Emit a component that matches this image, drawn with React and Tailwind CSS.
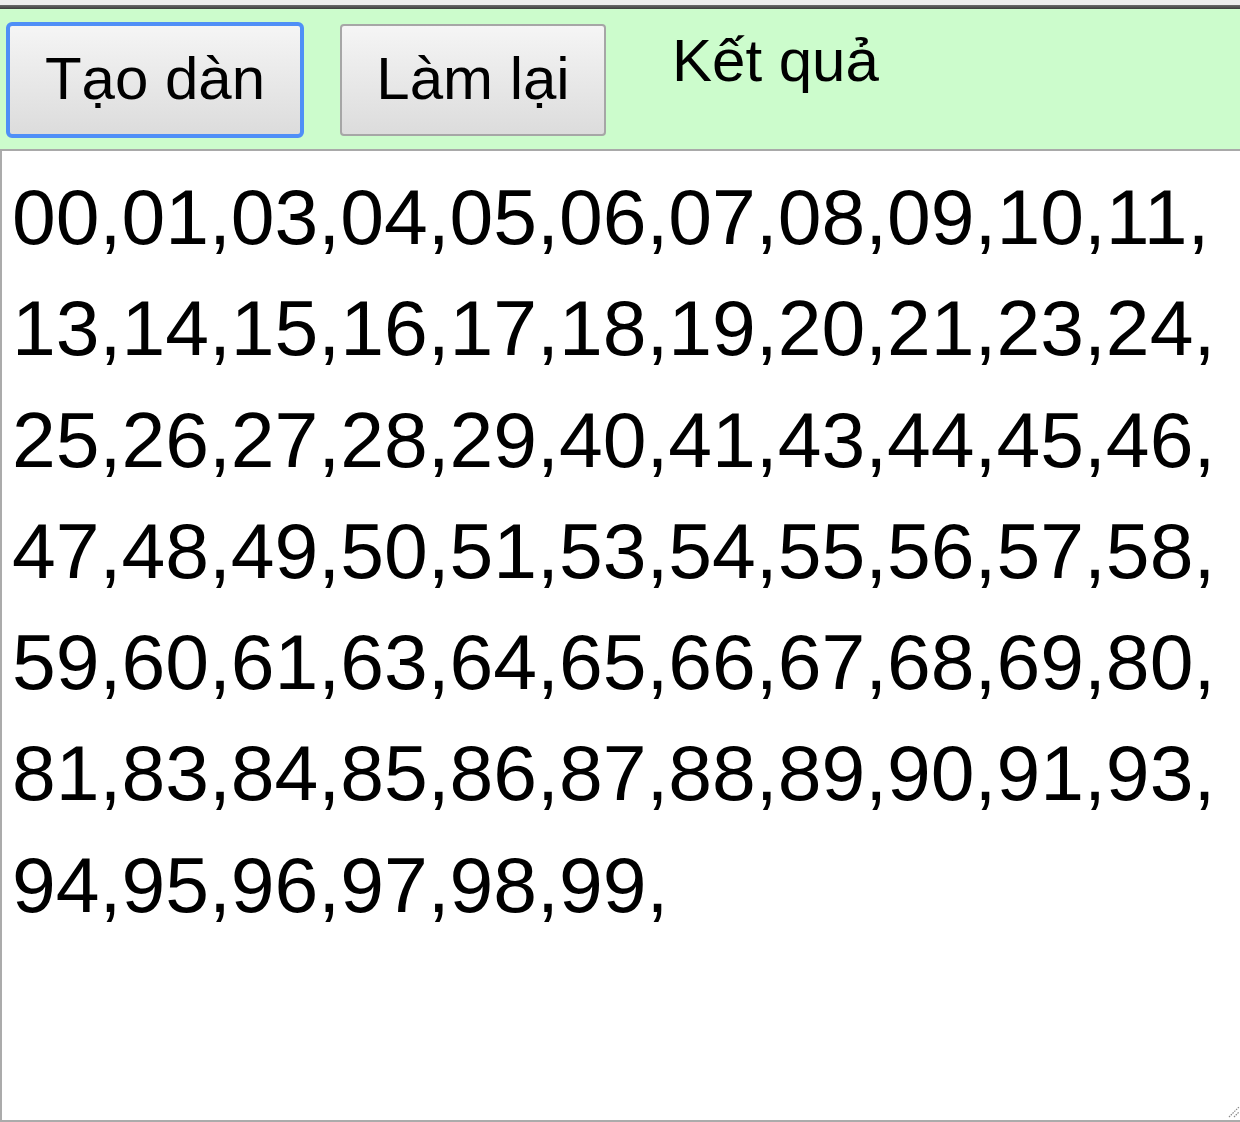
export default function App() {
  const rows = [
    "00,01,03,04,05,06,07,08,09,10,11,",
    "13,14,15,16,17,18,19,20,21,23,24,",
    "25,26,27,28,29,40,41,43,44,45,46,",
    "47,48,49,50,51,53,54,55,56,57,58,",
    "59,60,61,63,64,65,66,67,68,69,80,",
    "81,83,84,85,86,87,88,89,90,91,93,",
    "94,95,96,97,98,99,",
  ];
  return (
    <div
      className="w-[1240px] h-[1122px] overflow-hidden bg-white text-black"
      style={{ fontFamily: '"Liberation Sans", Arial, sans-serif' }}
    >
      <div className="h-[5px] bg-[#ececec]" />
      <div className="h-[4px] bg-gradient-to-b from-[#6a6a6a] to-[#3c3c3c]" />
      <div className="h-[140px] bg-[#ccfccc] flex items-start">
        <button className="ml-[6px] mt-[13px] w-[298px] h-[116px] rounded-[6px] border-[4px] border-[#4f8ff7] bg-gradient-to-b from-[#f5f5f5] to-[#dcdcdc] text-[60px] leading-none flex items-center justify-center pb-[3px]">
          Tạo dàn
        </button>
        <button className="ml-[36px] mt-[15px] w-[266px] h-[112px] rounded-[4px] border-[2px] border-[#a6a6a6] bg-gradient-to-b from-[#f5f5f5] to-[#dcdcdc] text-[60px] leading-none flex items-center justify-center pb-[3px]">
          Làm lại
        </button>
        <div className="ml-[66px] mt-[17px] text-[60px] leading-[70px]">Kết quả</div>
      </div>
      <div className="h-[2px] bg-[#a9a9a9]" />
      <div className="relative h-[971px] border-l-[2px] border-b-[2px] border-[#ababab] bg-white pl-[10px] pt-[11px]">
        <div className="text-[78.7px] leading-[111.3px]">
          {rows.map((r, i) => (
            <div key={i} className="whitespace-nowrap">{r}</div>
          ))}
        </div>
        <svg
          className="absolute right-0 bottom-[2px]"
          width="12"
          height="12"
          viewBox="0 0 12 12"
        >
          <line x1="1" y1="11" x2="11" y2="1" stroke="#8a8a8a" strokeWidth="1.2" strokeDasharray="1.5 1" />
          <line x1="6" y1="11" x2="11" y2="6" stroke="#8a8a8a" strokeWidth="1.2" strokeDasharray="1.5 1" />
        </svg>
      </div>
    </div>
  );
}
